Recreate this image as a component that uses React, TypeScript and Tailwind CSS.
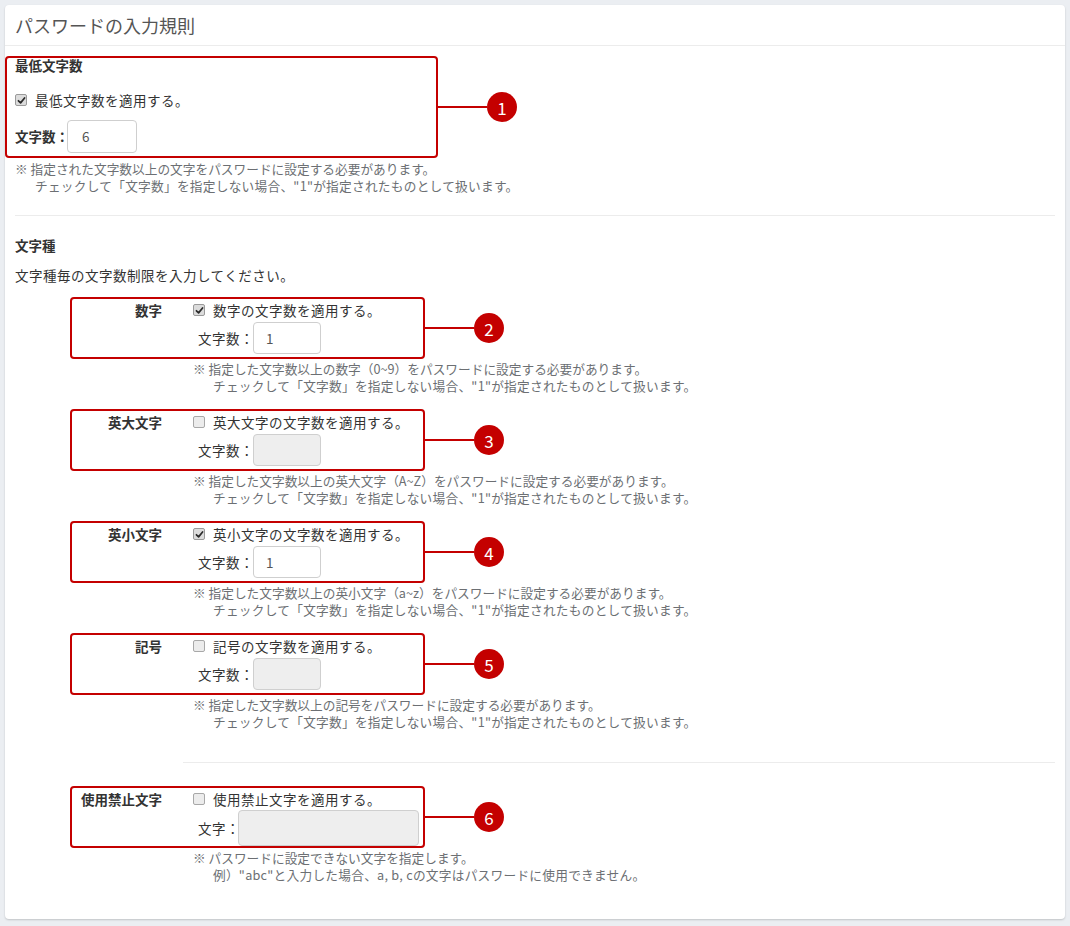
import React from "react";

const FONT = { fontFamily: '"Noto Sans CJK JP", "Noto Sans", sans-serif' };

function Check({ checked }: { checked: boolean }) {
  return (
    <span
      className={
        "inline-flex w-[12px] h-[12px] rounded-[2px] border items-center justify-center shrink-0 " +
        (checked ? "border-[#9a9a9a] bg-[#dcdcdc]" : "border-[#a8a8a8] bg-[#ececec]")
      }
    >
      {checked && (
        <svg viewBox="0 0 10 10" className="w-[9px] h-[9px]">
          <path d="M1.6 5.3 L4 7.6 L8.4 2.2" stroke="#2b2b2b" strokeWidth="1.9" fill="none" strokeLinecap="round" strokeLinejoin="round" />
        </svg>
      )}
    </span>
  );
}

function Callout({ n, className }: { n: number; className: string }) {
  return (
    <div className={"absolute left-full flex items-center " + className}>
      <div className="w-[51px] h-[2px] bg-[#c40000]" />
      <div className="w-[30px] h-[30px] rounded-full bg-[#c40000] text-white flex items-center justify-center text-[17px] leading-none" style={FONT}>
        {n}
      </div>
    </div>
  );
}

function Notes({ lines }: { lines: string[] }) {
  return (
    <div className="text-[12.7px] leading-[17px] text-[#6c6f73]">
      <div className="whitespace-nowrap">※ {lines[0]}</div>
      <div className="whitespace-nowrap pl-[20px] tracking-[0.25px]">{lines[1]}</div>
    </div>
  );
}

const STD2 = 'チェックして「文字数」を指定しない場合、"1"が指定されたものとして扱います。';

function TypeRow(props: {
  n: number;
  label: string;
  check: string;
  checked: boolean;
  inputLabel: string;
  value: string;
  big?: boolean;
  notes: string[];
}) {
  const { n, label, check, checked, inputLabel, value, big, notes } = props;
  return (
    <div className="ml-[55px]">
      <div className="relative w-[355px] h-[62px] border-2 border-[#c40000] rounded-[4px] flex pt-[2px]">
        <div className="w-[90px] text-right font-bold text-[13.5px] leading-[18px] text-[#333] whitespace-nowrap">{label}</div>
        <div className="pl-[31px] flex flex-col">
          <div className="flex items-center h-[18px] gap-[8px] text-[13.5px] tracking-[0.5px] text-[#333] whitespace-nowrap">
            <Check checked={checked} />
            <span>{check}</span>
          </div>
          <div className={"flex items-center pl-[5px] " + (big ? "mt-[2px]" : "mt-[3px]")}>
            <span className={"text-[13.5px] tracking-[0.5px] text-[#333] whitespace-nowrap " + (big ? "w-[40px]" : "w-[55px]")}>{inputLabel}</span>
            <div
              className={
                "border border-[#cfcfcf] rounded-[4px] flex items-center pl-[12px] text-[13.5px] text-[#555] " +
                (big ? "w-[181px] h-[36px] " : "w-[68px] h-[32px] ") +
                (value ? "bg-white" : "bg-[#eeeeee]")
              }
            >
              {value}
            </div>
          </div>
        </div>
        <Callout n={n} className="top-1/2 -translate-y-1/2" />
      </div>
      <div className="ml-[123px] mt-[1px]">
        <Notes lines={notes} />
      </div>
    </div>
  );
}

export default function App() {
  return (
    <div className="min-h-[926px] bg-[#ebeef2] p-[5px]" style={FONT}>
      <div className="bg-white rounded-[4px] shadow-[0_1px_2px_rgba(0,0,0,0.18)] h-[914px]">
        <div className="h-[41px] border-b border-[#ececec] flex items-center px-[10px]">
          <span className="text-[18px] text-[#555]">パスワードの入力規則</span>
        </div>
        <div className="px-[10px] pt-[10px]">
          {/* Section 1 */}
          <div className="relative -ml-[10px] w-[433px] h-[102px] border-2 border-[#c40000] rounded-[4px] pl-[8px] flex flex-col">
            <div className="font-bold text-[13.5px] leading-[14px] text-[#333]">最低文字数</div>
            <div className="mt-[18px] h-[20px] flex items-center gap-[8px] text-[13.5px] tracking-[0.5px] text-[#333]">
              <Check checked />
              <span>最低文字数を適用する。</span>
            </div>
            <div className="mt-[10px] flex items-center">
              <span className="font-bold text-[13.5px] text-[#333] w-[52px] whitespace-nowrap">文字数：</span>
              <div className="w-[70px] h-[33px] border border-[#cfcfcf] rounded-[4px] flex items-center pl-[14px] text-[13.5px] text-[#555] bg-white">
                6
              </div>
            </div>
            <Callout n={1} className="top-[34px]" />
          </div>
          <div className="mt-[2px]">
            <Notes lines={["指定された文字数以上の文字をパスワードに設定する必要があります。", STD2]} />
          </div>

          <div className="mt-[21px] border-t border-[#ececec]" />

          <div className="mt-[20px] font-bold text-[13.5px] leading-[18px] text-[#333]">文字種</div>
          <div className="mt-[12px] text-[13.5px] tracking-[0.5px] leading-[18px] text-[#333]">文字種毎の文字数制限を入力してください。</div>

          <div className="mt-[13px] flex flex-col gap-[15px]">
            <TypeRow
              n={2}
              label="数字"
              check="数字の文字数を適用する。"
              checked
              inputLabel="文字数："
              value="1"
              notes={["指定した文字数以上の数字（0~9）をパスワードに設定する必要があります。", STD2]}
            />
            <TypeRow
              n={3}
              label="英大文字"
              check="英大文字の文字数を適用する。"
              checked={false}
              inputLabel="文字数："
              value=""
              notes={["指定した文字数以上の英大文字（A~Z）をパスワードに設定する必要があります。", STD2]}
            />
            <TypeRow
              n={4}
              label="英小文字"
              check="英小文字の文字数を適用する。"
              checked
              inputLabel="文字数："
              value="1"
              notes={["指定した文字数以上の英小文字（a~z）をパスワードに設定する必要があります。", STD2]}
            />
            <TypeRow
              n={5}
              label="記号"
              check="記号の文字数を適用する。"
              checked={false}
              inputLabel="文字数："
              value=""
              notes={["指定した文字数以上の記号をパスワードに設定する必要があります。", STD2]}
            />
          </div>

          <div className="mt-[32px] ml-[168px] border-t border-[#ececec]" />

          <div className="mt-[23px]">
            <TypeRow
              n={6}
              label="使用禁止文字"
              check="使用禁止文字を適用する。"
              checked={false}
              inputLabel="文字："
              value=""
              big
              notes={["パスワードに設定できない文字を指定します。", '例）"abc"と入力した場合、a, b, cの文字はパスワードに使用できません。']}
            />
          </div>
        </div>
      </div>
    </div>
  );
}
